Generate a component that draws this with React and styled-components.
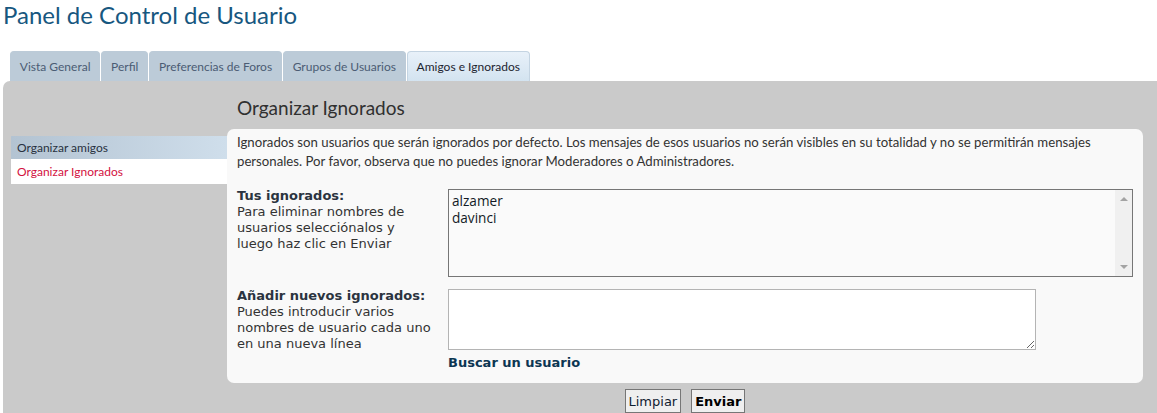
import React from "react";
import styled, { createGlobalStyle } from "styled-components";

const Global = createGlobalStyle`
  html, body {
    margin: 0;
    padding: 0;
    background: #ffffff;
    overflow: hidden;
  }
`;

const tabs = [
  "Vista General",
  "Perfil",
  "Preferencias de Foros",
  "Grupos de Usuarios",
  "Amigos e Ignorados",
];

const App = () => {
  return (
    <Page>
      <Global />
      <Title>Panel de Control de Usuario</Title>
      <Tabs>
        {tabs.map((t, i) => (
          <Tab key={t} $active={i === tabs.length - 1}>
            {t}
          </Tab>
        ))}
      </Tabs>
      <Panel>
        <Menu>
          <MenuItem>Organizar amigos</MenuItem>
          <MenuItem $current>Organizar Ignorados</MenuItem>
        </Menu>
        <Main>
          <Heading>Organizar Ignorados</Heading>
          <Box>
            <Intro>
              Ignorados son usuarios que serán ignorados por defecto. Los
              mensajes de esos usuarios no serán visibles en su totalidad y no
              se permitirán mensajes personales. Por favor, observa que no
              puedes ignorar Moderadores o Administradores.
            </Intro>
            <Form>
              <Label>
                <strong>Tus ignorados:</strong>
                <br />
                Para eliminar nombres de usuarios selecciónalos y luego haz
                clic en Enviar
              </Label>
              <Field>
                <ListBox>
                  <Options>
                    <Option>alzamer</Option>
                    <Option>davinci</Option>
                  </Options>
                  <ScrollTrack>
                    <Arrow $up />
                    <Arrow />
                  </ScrollTrack>
                </ListBox>
              </Field>
              <Label>
                <strong>Añadir nuevos ignorados:</strong>
                <br />
                Puedes introducir varios nombres de usuario cada uno en una
                nueva línea
              </Label>
              <Field>
                <Area />
                <SearchLink>Buscar un usuario</SearchLink>
              </Field>
            </Form>
          </Box>
          <Buttons>
            <Button>Limpiar</Button>
            <Button $primary>Enviar</Button>
          </Buttons>
        </Main>
      </Panel>
    </Page>
  );
};

export default App;

const Page = styled.div`
  padding-left: 3px;
  width: 1154px;
`;

const Title = styled.h1`
  margin: 0;
  padding-top: 0;
  font-family: Lato, "Open Sans", sans-serif;
  font-weight: 400;
  font-size: 24px;
  line-height: 30px;
  color: #17577f;
`;

const Tabs = styled.div`
  display: flex;
  gap: 1px;
  margin-top: 21px;
  padding-left: 7px;
`;

const Tab = styled.div`
  height: 30px;
  box-sizing: border-box;
  padding: 0 8.8px;
  display: flex;
  align-items: center;
  font-family: Lato, "Open Sans", sans-serif;
  font-size: 12px;
  border-radius: 4px 4px 0 0;
  border: 1px solid ${(p) => (p.$active ? "#c4d4e2" : "#bccbd8")};
  border-bottom: none;
  color: ${(p) => (p.$active ? "#1d2430" : "#4b5c74")};
  background: ${(p) =>
    p.$active
      ? "linear-gradient(to bottom, #e8f1f9 0%, #d3e3f0 100%)"
      : "#bccbd8"};
`;

const Panel = styled.div`
  display: grid;
  grid-template-columns: 224px 1fr;
  background: #cacaca;
  border-radius: 7px 0 0 0;
  padding: 0 14px 20px 0;
  min-height: 340px;
`;

const Menu = styled.div`
  margin: 55px 0 0 8px;
  display: flex;
  flex-direction: column;
  align-self: start;
`;

const MenuItem = styled.div`
  height: ${(p) => (p.$current ? "25px" : "23px")};
  box-sizing: border-box;
  padding-left: 6px;
  display: flex;
  align-items: center;
  font-family: Lato, "Open Sans", sans-serif;
  font-size: 12px;
  color: ${(p) => (p.$current ? "#d31141" : "#28313f")};
  background: ${(p) =>
    p.$current
      ? "#ffffff"
      : "linear-gradient(to right, #b3c3d2 0%, #cfdeeb 100%)"};
`;

const Main = styled.div`
  display: flex;
  flex-direction: column;
`;

const Heading = styled.h2`
  margin: 14px 0 0 10px;
  font-family: Lato, "Open Sans", sans-serif;
  font-weight: 400;
  font-size: 19px;
  line-height: 26px;
  color: #303030;
  height: 34px;
`;

const Box = styled.div`
  background: #f9f9f9;
  border-radius: 7px;
  padding: 4px 10px 12px 10px;
`;

const Intro = styled.p`
  margin: 0;
  font-family: Lato, "Open Sans", sans-serif;
  font-size: 13.2px;
  line-height: 19px;
  color: #333333;
`;

const Form = styled.div`
  display: grid;
  grid-template-columns: 211px 1fr;
  row-gap: 12px;
  margin-top: 18px;
`;

const Label = styled.div`
  margin-top: -1px;
  font-family: "DejaVu Sans", Verdana, sans-serif;
  font-size: 13px;
  line-height: 16px;
  color: #333333;
  padding-right: 15px;

  strong {
    color: #2b3440;
  }
`;

const Field = styled.div`
  display: flex;
  flex-direction: column;
  align-items: flex-start;
`;

const ListBox = styled.div`
  display: flex;
  width: 685px;
  height: 88px;
  box-sizing: border-box;
  border: 1px solid #767676;
  background: #fafafa;
`;

const Options = styled.div`
  flex: 1;
  padding: 2px 3px;
`;

const Option = styled.div`
  font-family: "Open Sans", "Noto Sans", sans-serif;
  font-size: 13.6px;
  line-height: 17px;
  color: #121a26;
`;

const ScrollTrack = styled.div`
  width: 17px;
  background: #f0f0f0;
  display: flex;
  flex-direction: column;
  justify-content: space-between;
  align-items: center;
  padding: 7px 0;
`;

const Arrow = styled.span`
  width: 0;
  height: 0;
  border-left: 4px solid transparent;
  border-right: 4px solid transparent;
  ${(p) =>
    p.$up
      ? "border-bottom: 4px solid #a3a3a3;"
      : "border-top: 4px solid #a3a3a3;"}
`;

const Area = styled.textarea`
  width: 588px;
  height: 61px;
  box-sizing: border-box;
  border: 1px solid #b4b4b4;
  background: #ffffff;
  margin: 0;
  padding: 2px;
  font-family: "DejaVu Sans", sans-serif;
  font-size: 13px;
`;

const SearchLink = styled.a`
  margin-top: 5px;
  font-family: "DejaVu Sans", Verdana, sans-serif;
  font-weight: bold;
  font-size: 13px;
  line-height: 16px;
  color: #0c3652;
  cursor: pointer;
`;

const Buttons = styled.div`
  display: flex;
  justify-content: center;
  gap: 10px;
  margin-top: 6px;
`;

const Button = styled.button`
  height: 24px;
  box-sizing: border-box;
  padding: 0 3px;
  border: 1px solid #767676;
  border-radius: 0;
  background: #efefef;
  font-family: "DejaVu Sans", Verdana, sans-serif;
  font-size: 13px;
  font-weight: ${(p) => (p.$primary ? "bold" : "normal")};
  color: ${(p) => (p.$primary ? "#000000" : "#0f2030")};
`;
